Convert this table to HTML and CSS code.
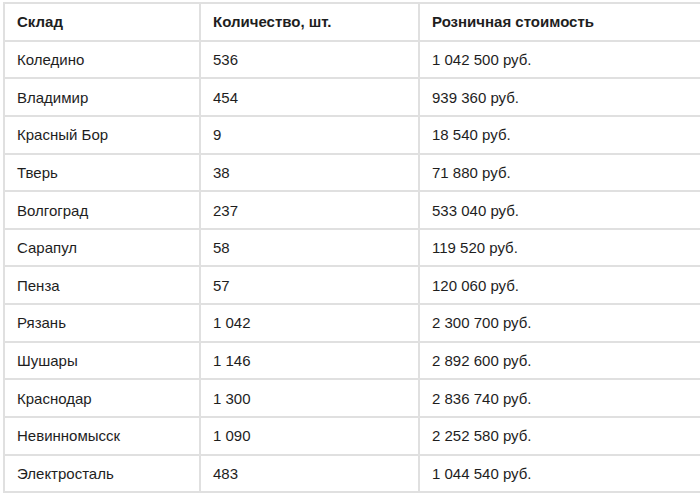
FILE: index.html
```
<!DOCTYPE html>
<html lang="ru">
<head>
<meta charset="utf-8">
<title>Склад</title>
<link rel="stylesheet" href="styles.css">
</head>
<body>
<table class="stock">
  <colgroup>
    <col class="c1"><col class="c2"><col class="c3">
  </colgroup>
  <thead>
    <tr><th>Склад</th><th>Количество, шт.</th><th>Розничная стоимость</th></tr>
  </thead>
  <tbody>
    <tr><td>Коледино</td><td>536</td><td>1 042 500 руб.</td></tr>
    <tr><td>Владимир</td><td>454</td><td>939 360 руб.</td></tr>
    <tr><td>Красный Бор</td><td>9</td><td>18 540 руб.</td></tr>
    <tr><td>Тверь</td><td>38</td><td>71 880 руб.</td></tr>
    <tr><td>Волгоград</td><td>237</td><td>533 040 руб.</td></tr>
    <tr><td>Сарапул</td><td>58</td><td>119 520 руб.</td></tr>
    <tr><td>Пенза</td><td>57</td><td>120 060 руб.</td></tr>
    <tr><td>Рязань</td><td>1 042</td><td>2 300 700 руб.</td></tr>
    <tr><td>Шушары</td><td>1 146</td><td>2 892 600 руб.</td></tr>
    <tr><td>Краснодар</td><td>1 300</td><td>2 836 740 руб.</td></tr>
    <tr><td>Невинномысск</td><td>1 090</td><td>2 252 580 руб.</td></tr>
    <tr><td>Электросталь</td><td>483</td><td>1 044 540 руб.</td></tr>
  </tbody>
</table>
</body>
</html>
```
FILE: styles.css
```
html, body {
  margin: 0;
  padding: 0;
  background: #ffffff;
  overflow: hidden;
}
body {
  padding: 2px 0 0 3px;
  font-family: "Liberation Sans", Arial, sans-serif;
  font-size: 15px;
  color: #1e1e1e;
}
.stock {
  border-collapse: collapse;
  width: 700px;
  table-layout: fixed;
}
.c1 { width: 196px; }
.c2 { width: 219px; }
.c3 { width: 285px; }
.stock th,
.stock td {
  border: 2px solid #e0e0e0;
  height: 37.65px;
  padding: 0 12px;
  text-align: left;
  vertical-align: middle;
  box-sizing: border-box;
}
.stock th {
  font-weight: bold;
}
```
